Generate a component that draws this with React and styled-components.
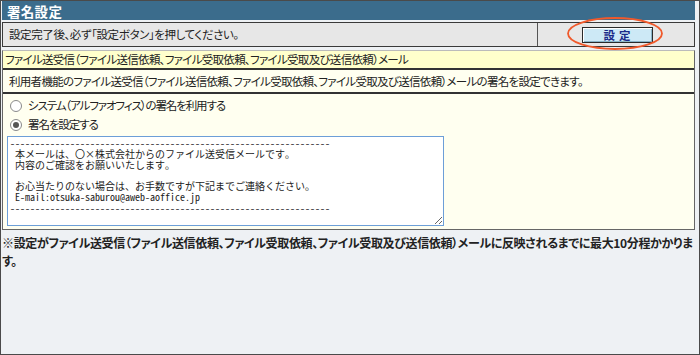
import React from "react";
import styled, { createGlobalStyle } from "styled-components";

const GlobalStyle = createGlobalStyle`
  body {
    margin: 0;
    background: #ffffff;
  }
`;

const Page = styled.div`
  position: relative;
  width: 700px;
  height: 355px;
  box-sizing: border-box;
  border: 1px solid #4a4a4a;
  background: #eef1f4;
  padding: 0 4px 0 1px;
  font-family: "Noto Sans CJK JP", "Noto Sans", sans-serif;
  font-feature-settings: "palt";
  color: #222;
`;

const Title = styled.div`
  height: 19px;
  background: #3b6c8c;
  color: #fff;
  font-size: 13.5px;
  font-weight: bold;
  line-height: 20px;
  padding-left: 5px;
  margin-bottom: 2px;
  letter-spacing: 0.3px;
`;

const SubmitBar = styled.div`
  display: flex;
  height: 23px;
  border: 1px solid #3a3a3a;
  background: #e7e7e7;
`;

const SubmitText = styled.div`
  width: 528px;
  border-right: 1px solid #555;
  font-size: 11.5px;
  letter-spacing: -0.4px;
  line-height: 23px;
  padding-left: 6px;
`;

const SubmitCell = styled.div`
  flex: 1;
  display: flex;
  justify-content: center;
  align-items: center;
  padding-left: 2px;
`;

const SetButton = styled.button`
  width: 71px;
  height: 16px;
  padding: 0;
  border: 1px solid #2a2a2a;
  box-shadow: inset 1px 1px 0 #ffffff, inset -1px -1px 0 #8ab4c8;
  background: #cde9f6;
  color: #1a2a88;
  font-family: inherit;
  font-size: 11.5px;
  font-weight: bold;
  letter-spacing: 4px;
  text-indent: 4px;
  line-height: 14px;
  cursor: pointer;
`;

const Ring = styled.svg`
  position: absolute;
  left: 565px;
  top: 15px;
  pointer-events: none;
`;

const InfoTable = styled.div`
  margin-top: 3px;
  border: 1px solid #666;
  border-top-color: #bbb;
`;

const Row = styled.div`
  background: ${(p) => p.$bg};
  border-bottom: ${(p) => (p.$last ? "none" : "2px solid #333")};
  font-size: 11.5px;
  letter-spacing: -0.7px;
  padding: ${(p) => p.$pad};
  line-height: ${(p) => p.$lh};
`;

const Option = styled.label`
  display: flex;
  align-items: center;
  gap: 6px;
  height: 19px;
  padding-left: 7px;
  font-size: 11.5px;
  letter-spacing: -1.1px;
`;

const Radio = styled.span`
  width: 10px;
  height: 10px;
  border-radius: 50%;
  border: 1px solid #8a8a8a;
  background: #fff;
  display: flex;
  align-items: center;
  justify-content: center;
  &::after {
    content: "";
    width: 6px;
    height: 6px;
    border-radius: 50%;
    background: ${(p) => (p.$on ? "#555" : "transparent")};
  }
`;

const Signature = styled.textarea`
  display: block;
  width: 437px;
  height: 90px;
  box-sizing: border-box;
  margin: 2px 0 0 4px;
  border: 1px solid #6d9fd8;
  padding: 1px 2px;
  font-family: "Noto Sans Mono CJK JP", "Noto Sans CJK JP", monospace;
  font-size: 10px;
  letter-spacing: 0;
  line-height: 10.8px;
  color: #222;
  background: #fff;
  resize: both;
  outline: none;
`;

const Note = styled.p`
  margin: 4px 0 0;
  font-size: 12px;
  font-weight: bold;
  line-height: 18px;
  letter-spacing: -0.35px;
`;

const signature = [
  "----------------------------------------------------------------",
  " 本メールは、〇×株式会社からのファイル送受信メールです。",
  " 内容のご確認をお願いいたします。",
  "",
  " お心当たりのない場合は、お手数ですが下記までご連絡ください。",
  " E-mail:otsuka-saburou@aweb-aoffice.jp",
  "----------------------------------------------------------------",
].join("\n");

const App = () => {
  return (
    <Page>
      <GlobalStyle />
      <Title>署名設定</Title>
      <SubmitBar>
        <SubmitText>設定完了後、必ず「設定ボタン」を押してください。</SubmitText>
        <SubmitCell>
          <SetButton>設定</SetButton>
        </SubmitCell>
      </SubmitBar>
      <Ring width="100" height="36" viewBox="0 0 100 36">
        <ellipse cx="49" cy="17.5" rx="47" ry="15.5" fill="none" stroke="#f0592b" strokeWidth="1.8" />
      </Ring>
      <InfoTable>
        <Row $bg="#ffffcc" $pad="0 0 0 2px" $lh="17px">
          ファイル送受信（ファイル送信依頼、ファイル受取依頼、ファイル受取及び送信依頼）メール
        </Row>
        <Row $bg="#fffff0" $pad="0 0 0 6px" $lh="22px">
          利用者機能のファイル送受信（ファイル送信依頼、ファイル受取依頼、ファイル受取及び送信依頼）メールの署名を設定できます。
        </Row>
        <Row $bg="#fffff0" $pad="2px 0 3px" $lh="19px" $last>
          <Option>
            <Radio />
            システム（アルファオフィス）の署名を利用する
          </Option>
          <Option>
            <Radio $on />
            署名を設定する
          </Option>
          <Signature defaultValue={signature} />
        </Row>
      </InfoTable>
      <Note>
        ※設定がファイル送受信（ファイル送信依頼、ファイル受取依頼、ファイル受取及び送信依頼）メールに反映されるまでに最大10分程かかります。
      </Note>
    </Page>
  );
};

export default App;
